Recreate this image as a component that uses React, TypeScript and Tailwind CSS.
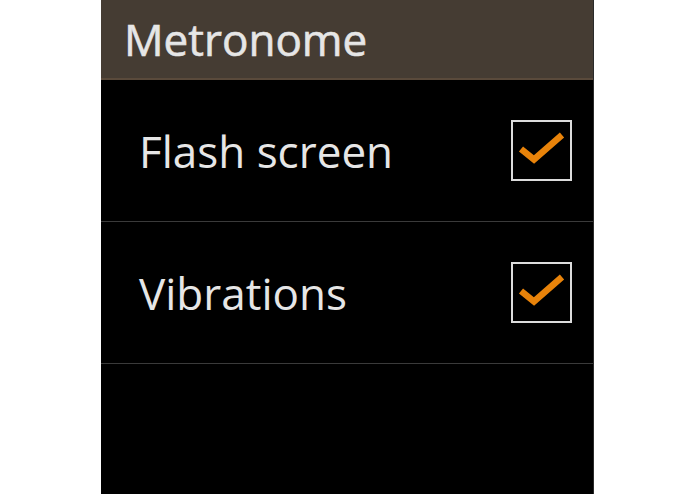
import React, { useState } from 'react';

interface Setting {
  id: string;
  label: string;
}

const SETTINGS: Setting[] = [
  { id: 'flash', label: 'Flash screen' },
  { id: 'vibrate', label: 'Vibrations' },
];

function CheckBox({ checked, onToggle }: { checked: boolean; onToggle: () => void }) {
  return (
    <button
      onClick={onToggle}
      className="flex h-[61px] w-[61px] shrink-0 items-center justify-center border-2 border-[#dcdcdc] bg-black"
    >
      {checked && (
        <svg width="57" height="57" viewBox="0 0 57 57">
          <path d="M8 27 L21 37.5 L49 13" fill="none" stroke="#e8830a" strokeWidth="6.5" strokeLinejoin="miter" />
        </svg>
      )}
    </button>
  );
}

export default function App() {
  const [values, setValues] = useState<Record<string, boolean>>({ flash: true, vibrate: true });

  return (
    <div className="flex h-[494px] w-[695px] justify-center bg-white" style={{ fontFamily: '"Open Sans", "Noto Sans", sans-serif' }}>
      <div className="flex h-full w-[493px] flex-col border-r border-[#2a2a2a] bg-black">
        {/* Header */}
        <div className="flex h-[80px] shrink-0 items-center border-b-2 border-[#5a4a3b] bg-[#453c33] pl-[23px]">
          <span className="text-[44px] leading-none text-[#e6e6e6] [-webkit-text-stroke:0.6px_#e6e6e6]">Metronome</span>
        </div>

        {/* Rows */}
        {SETTINGS.map((s) => (
          <div key={s.id} className="flex h-[142px] shrink-0 items-center justify-between border-b border-[#3a3a3a] pl-[38px] pr-[21px]">
            <span className="text-[44px] leading-none text-[#e6e6e6]">{s.label}</span>
            <CheckBox
              checked={values[s.id]}
              onToggle={() => setValues((prev) => ({ ...prev, [s.id]: !prev[s.id] }))}
            />
          </div>
        ))}
      </div>
    </div>
  );
}
